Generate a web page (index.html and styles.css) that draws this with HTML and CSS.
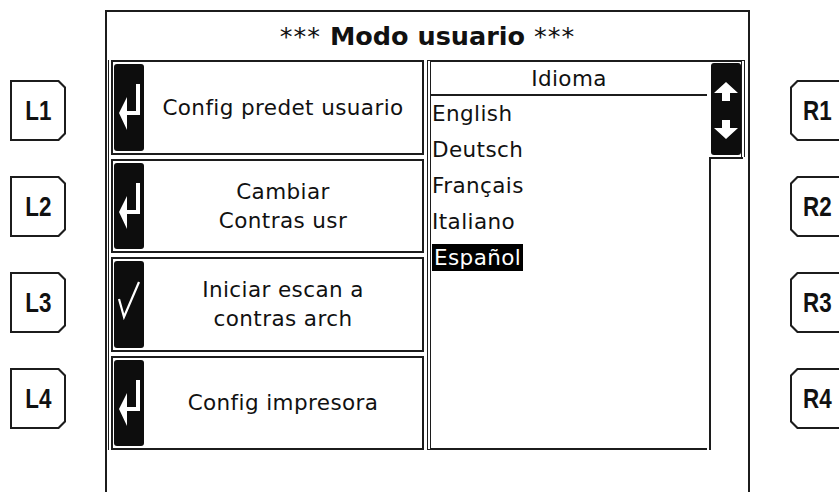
FILE: index.html
```html
<!DOCTYPE html>
<html lang="es">
<head>
<meta charset="utf-8">
<title>Modo usuario</title>
<link rel="stylesheet" href="styles.css">
</head>
<body>
<div class="screen">
  <div class="keys keys-left">
    <div class="key key-l"><div class="key-face"><span>L1</span></div></div>
    <div class="key key-l"><div class="key-face"><span>L2</span></div></div>
    <div class="key key-l"><div class="key-face"><span>L3</span></div></div>
    <div class="key key-l"><div class="key-face"><span>L4</span></div></div>
  </div>

  <div class="frame">
    <div class="title"><span class="stars">***</span> Modo usuario <span class="stars">***</span></div>
    <div class="panels">
      <div class="menu">
        <div class="row">
          <div class="icon">
            <svg width="30" height="86" viewBox="0 0 30 86"><polygon fill="#fff" points="22,20 26,20 26,51 13,51 13,66 5,49 13,33 13,47 22,47"/></svg>
          </div>
          <div class="label">Config predet usuario</div>
        </div>
        <div class="row">
          <div class="icon">
            <svg width="30" height="86" viewBox="0 0 30 86"><polygon fill="#fff" points="22,20 26,20 26,51 13,51 13,66 5,49 13,33 13,47 22,47"/></svg>
          </div>
          <div class="label">Cambiar<br>Contras usr</div>
        </div>
        <div class="row">
          <div class="icon">
            <svg width="30" height="86" viewBox="0 0 30 86"><polyline fill="none" stroke="#fff" stroke-width="2.2" points="5,38 10,56 25,21"/></svg>
          </div>
          <div class="label">Iniciar escan a<br>contras arch</div>
        </div>
        <div class="row">
          <div class="icon">
            <svg width="30" height="86" viewBox="0 0 30 86"><polygon fill="#fff" points="22,20 26,20 26,51 13,51 13,66 5,49 13,33 13,47 22,47"/></svg>
          </div>
          <div class="label">Config impresora</div>
        </div>
      </div>

      <div class="list">
        <div class="list-main">
          <div class="list-head">Idioma</div>
          <ul class="items">
            <li>English</li>
            <li>Deutsch</li>
            <li>Français</li>
            <li>Italiano</li>
            <li><span class="selected">Español</span></li>
          </ul>
        </div>
        <div class="scroll">
          <div class="scroll-top">
            <div class="thumb">
              <svg width="30" height="92" viewBox="0 0 30 92">
                <polygon fill="#fff" points="15,19 27,30 19,30 19,38 11,38 11,30 3,30"/>
                <polygon fill="#fff" points="11,57 19,57 19,65 27,65 15,76 3,65 11,65"/>
              </svg>
            </div>
          </div>
          <div class="track"></div>
        </div>
      </div>
    </div>
  </div>

  <div class="keys keys-right">
    <div class="key key-r"><div class="key-face"><span>R1</span></div></div>
    <div class="key key-r"><div class="key-face"><span>R2</span></div></div>
    <div class="key key-r"><div class="key-face"><span>R3</span></div></div>
    <div class="key key-r"><div class="key-face"><span>R4</span></div></div>
  </div>
</div>
</body>
</html>
```

FILE: styles.css
```css
* { box-sizing: border-box; }

html, body {
  margin: 0;
  padding: 0;
  background: #fff;
}

body {
  width: 839px;
  height: 492px;
  overflow: hidden;
  color: #111;
  font-family: "DejaVu Sans", sans-serif;
}

.screen {
  display: flex;
  height: 492px;
}

/* side keys */
.keys {
  display: flex;
  flex-direction: column;
  gap: 35px;
  padding-top: 80px;
}

.keys-left {
  width: 105px;
  flex-shrink: 0;
  padding-left: 10px;
}

.keys-right {
  flex: 1;
  min-width: 0;
  padding-left: 40px;
}

.key {
  height: 61px;
  flex-shrink: 0;
  background: #1c1c1c;
  padding: 2px;
}

.key-l {
  width: 56px;
  clip-path: polygon(0 0, calc(100% - 7px) 0, 100% 7px, 100% calc(100% - 7px), calc(100% - 7px) 100%, 0 100%);
}

.key-r {
  width: 70px;
  clip-path: polygon(7px 0, 100% 0, 100% 100%, 7px 100%, 0 calc(100% - 7px), 0 7px);
}

.key-face {
  height: 100%;
  background: #fff;
  display: flex;
  align-items: center;
  font-family: "Liberation Sans", sans-serif;
  font-weight: bold;
  font-size: 28px;
}

.key-l .key-face {
  justify-content: center;
  clip-path: polygon(0 0, calc(100% - 6px) 0, 100% 6px, 100% calc(100% - 6px), calc(100% - 6px) 100%, 0 100%);
}

.key-r .key-face {
  padding-left: 11px;
  clip-path: polygon(6px 0, 100% 0, 100% 100%, 6px 100%, 0 calc(100% - 6px), 0 6px);
}

.key-face span {
  display: inline-block;
  transform: scaleX(0.8);
}

.key-r .key-face span {
  transform-origin: left center;
}

/* main frame */
.frame {
  width: 645px;
  flex-shrink: 0;
  margin-top: 10px;
  border: 2px solid #1c1c1c;
  border-bottom: none;
  display: flex;
  flex-direction: column;
}

.title {
  height: 48px;
  line-height: 48px;
  text-align: center;
  font-weight: bold;
  font-size: 25.5px;
}

.stars {
  font-weight: normal;
  letter-spacing: 1px;
}

.panels {
  display: flex;
  height: 390px;
  padding-left: 1px;
}

/* left menu */
.menu {
  width: 317px;
  border-left: 1px solid #1c1c1c;
  padding-left: 2px;
  display: flex;
  flex-direction: column;
  gap: 4px;
}

.row {
  flex: 1;
  display: flex;
  border: 2px solid #1c1c1c;
  padding: 2px 0 2px 1px;
}

.icon {
  width: 30px;
  background: #0d0d0d;
  border-radius: 3px;
  overflow: hidden;
}

.icon svg {
  display: block;
}

.label {
  flex: 1;
  display: flex;
  align-items: center;
  justify-content: center;
  text-align: center;
  font-size: 21.5px;
  letter-spacing: 0.4px;
  line-height: 29px;
}

/* language list */
.list {
  flex: 1;
  display: flex;
  margin-left: 3px;
  margin-right: 3px;
}

.list-main {
  width: 280px;
  border-left: 4px double #1c1c1c;
  border-top: 2px solid #1c1c1c;
  border-bottom: 2px solid #1c1c1c;
  display: flex;
  flex-direction: column;
}

.list-head {
  height: 34px;
  line-height: 33px;
  text-align: center;
  font-size: 21.5px;
  letter-spacing: 0.4px;
  border-bottom: 2px solid #1c1c1c;
}

.items {
  list-style: none;
  margin: 0;
  padding: 0 0 0 1px;
  font-size: 21.5px;
  letter-spacing: 0.4px;
}

.items li {
  height: 36px;
  line-height: 36px;
}

.selected {
  display: inline-block;
  background: #000;
  color: #fff;
  line-height: 27px;
  padding: 0 2px;
}

/* scroll bar */
.scroll {
  flex: 1;
  display: flex;
  flex-direction: column;
}

.scroll-top {
  height: 97px;
  border-top: 2px solid #1c1c1c;
  border-right: 4px double #1c1c1c;
  padding: 1px 0 0 4px;
}

.thumb {
  width: 30px;
  height: 92px;
  background: #0d0d0d;
  border-radius: 3px;
  overflow: hidden;
}

.thumb svg {
  display: block;
}

.track {
  flex: 1;
  margin-left: 2px;
  margin-right: 2px;
  border-left: 2px solid #1c1c1c;
  border-top: 2px solid #1c1c1c;
}
```
